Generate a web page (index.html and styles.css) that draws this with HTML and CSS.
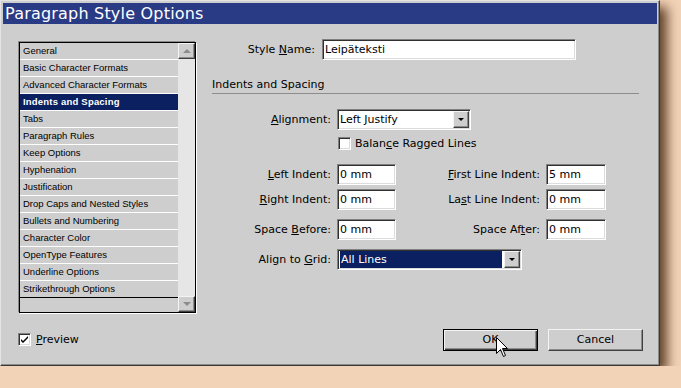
FILE: index.html
```html
<!DOCTYPE html>
<html lang="en">
<head>
<meta charset="UTF-8">
<meta name="viewport" content="width=device-width, initial-scale=1.0">
<title>Paragraph Style Options</title>
<link rel="stylesheet" href="styles.css">
</head>
<body>

<div class="dialog">
    <div class="titlebar">Paragraph Style Options</div>
    <div class="content">
        <div class="main">
            <div class="sidebar">
                <ul class="cats">
                    <li>General</li>
                    <li>Basic Character Formats</li>
                    <li>Advanced Character Formats</li>
                    <li class="active">Indents and Spacing</li>
                    <li>Tabs</li>
                    <li>Paragraph Rules</li>
                    <li>Keep Options</li>
                    <li>Hyphenation</li>
                    <li>Justification</li>
                    <li>Drop Caps and Nested Styles</li>
                    <li>Bullets and Numbering</li>
                    <li>Character Color</li>
                    <li>OpenType Features</li>
                    <li>Underline Options</li>
                    <li>Strikethrough Options</li>
                </ul>
                <div class="scrollbar">
                    <span class="sbtn"><span class="tri up"></span></span>
                    <span class="sbtn"><span class="tri down"></span></span>
                </div>
            </div>

            <div class="pane">
                <div class="name-row">
                    <span class="name-label">Style <u>N</u>ame:</span>
                    <div class="field name-field">Leipäteksti</div>
                </div>
                <div class="section">Indents and Spacing</div>

                <div class="fields">
                    <div class="row">
                        <span class="label"><u>A</u>lignment:</span>
                        <div class="field select align-select">
                            <span class="value">Left Justify</span>
                            <span class="drop"><span class="arrow"></span></span>
                        </div>
                    </div>
                    <div class="row row-check">
                        <span class="check-wrap">
                            <span class="checkbox"></span>
                            <span>Balan<u>c</u>e Ragged Lines</span>
                        </span>
                    </div>
                    <div class="row row-first">
                        <span class="label"><u>L</u>eft Indent:</span>
                        <div class="field">0 mm</div>
                        <span class="label"><u>F</u>irst Line Indent:</span>
                        <div class="field">5 mm</div>
                    </div>
                    <div class="row row-tight">
                        <span class="label"><u>R</u>ight Indent:</span>
                        <div class="field">0 mm</div>
                        <span class="label">La<u>s</u>t Line Indent:</span>
                        <div class="field">0 mm</div>
                    </div>
                    <div class="row row-space">
                        <span class="label">Space <u>B</u>efore:</span>
                        <div class="field">0 mm</div>
                        <span class="label">Space Af<u>t</u>er:</span>
                        <div class="field">0 mm</div>
                    </div>
                    <div class="row row-space">
                        <span class="label">Align to <u>G</u>rid:</span>
                        <div class="field select grid-select">
                            <span class="value hl">All Lines</span>
                            <span class="drop"><span class="arrow"></span></span>
                        </div>
                    </div>
                </div>
            </div>
        </div>

        <div class="footer">
            <span class="check-wrap">
                <span class="checkbox checked">
                    <svg width="9" height="9" viewBox="0 0 9 9"><path d="M1 4 L3 6 L8 1 V3 L3 8 L1 6 Z" fill="#000"/></svg>
                </span>
                <span><u>P</u>review</span>
            </span>
            <div class="buttons">
                <button class="btn default">OK</button>
                <button class="btn">Cancel</button>
            </div>
        </div>
    </div>

    <svg class="cursor" width="12" height="20" viewBox="0 0 12 20">
        <path d="M0.5 0.5 V16.5 L4.5 12.5 L7.5 19.5 L9.5 18.5 L6.5 11.5 H11.5 Z" fill="#fff" stroke="#000" stroke-width="1" stroke-linejoin="miter"/>
    </svg>
</div>

</body>
</html>
```

FILE: styles.css
```css
body {
    margin: 0;
    background-color: #f2d3b8;
    font-family: "DejaVu Sans", Verdana, sans-serif;
    font-size: 11px;
    color: #000;
}
u {
    text-decoration-thickness: 1px;
    text-underline-offset: 1px;
}

.dialog {
    position: relative;
    width: 660px;
    height: 366px;
    box-sizing: border-box;
    background-color: #cecece;
    border: 1px solid;
    border-color: #e4e4e4 #3a3a3a #3a3a3a #e4e4e4;
    box-shadow: inset -1px -1px 0 #8c8c8c, 7px 7px 11px rgba(60, 30, 5, 0.8);
}
.titlebar {
    margin: 2px 2px 0;
    height: 21px;
    padding-left: 2px;
    background-color: #2a3b85;
    color: #fff;
    font-size: 16px;
    letter-spacing: 0.2px;
    line-height: 21px;
}
.content {
    padding: 13px 16px 0 17px;
}
.main {
    display: flex;
    gap: 16px;
}

/* category list */
.sidebar {
    display: flex;
    margin: 5px 0 0 1px;
    width: 177px;
    height: 271px;
    box-sizing: border-box;
    border: 1px solid #000;
    box-shadow: -1px -1px 0 #8a8a8a, 1px 1px 0 #fff;
}
.cats {
    list-style: none;
    margin: 0;
    padding: 0;
    width: 158px;
    font-family: "Liberation Sans", Arial, sans-serif;
    font-size: 9.5px;
}
.cats li {
    height: 16px;
    line-height: 16px;
    padding-left: 3px;
    border-bottom: 1px solid #fff;
    white-space: nowrap;
}
.cats li:last-child {
    border-bottom-color: #000;
}
.cats li.active {
    background-color: #0a2060;
    color: #fff;
    font-weight: bold;
    letter-spacing: 0.2px;
}
.scrollbar {
    flex: 1;
    display: flex;
    flex-direction: column;
    justify-content: space-between;
    background-color: #e6e6e6;
}
.sbtn {
    display: flex;
    align-items: center;
    justify-content: center;
    height: 16px;
    box-sizing: border-box;
    background-color: #cecece;
    border: 1px solid;
    border-color: #f4f4f4 #404040 #404040 #f4f4f4;
    box-shadow: inset -1px -1px 0 #8c8c8c;
}
.tri {
    width: 0;
    height: 0;
    border-left: 4px solid transparent;
    border-right: 4px solid transparent;
}
.tri.up {
    border-bottom: 4px solid #8c8c8c;
}
.tri.down {
    border-top: 4px solid #8c8c8c;
}

/* right side */
.pane {
    width: 427px;
    padding-top: 2px;
}
.name-row {
    display: flex;
    align-items: center;
    gap: 7px;
}
.name-label {
    width: 103px;
    text-align: right;
}
.field {
    height: 21px;
    box-sizing: border-box;
    padding-left: 2px;
    line-height: 19px;
    background-color: #fff;
    border: 1px solid;
    border-color: #808080 #fff #fff #808080;
    box-shadow: inset 1px 1px 0 #303030, inset -1px -1px 0 #dcdcdc;
    white-space: nowrap;
}
.name-field {
    width: 254px;
}
.section {
    margin-top: 17px;
    line-height: 16px;
    border-bottom: 1px solid #8c8c8c;
}

.fields {
    margin-top: 15px;
}
.row {
    display: grid;
    grid-template-columns: 119px 59px 138px 60px;
    column-gap: 6px;
    align-items: center;
}
.row .label {
    text-align: right;
    white-space: nowrap;
}
.row-check {
    margin-top: 7px;
}
.row-first {
    margin-top: 14px;
}
.row-tight {
    margin-top: 4px;
}
.row-space {
    margin-top: 9px;
}
.select {
    grid-column: 2 / 5;
    display: flex;
    align-items: center;
    padding: 0 1px 0 2px;
}
.align-select {
    width: 134px;
}
.grid-select {
    width: 185px;
}
.select .value {
    flex: 1;
    height: 17px;
    line-height: 17px;
}
.select .value.hl {
    margin-right: 2px;
    padding-left: 1px;
    background-color: #0a2060;
    color: #fff;
}
.drop {
    display: flex;
    align-items: center;
    justify-content: center;
    width: 16px;
    height: 17px;
    box-sizing: border-box;
    background-color: #cecece;
    border: 1px solid;
    border-color: #f4f4f4 #404040 #404040 #f4f4f4;
    box-shadow: inset -1px -1px 0 #8c8c8c;
}
.arrow {
    width: 0;
    height: 0;
    border-left: 3px solid transparent;
    border-right: 3px solid transparent;
    border-top: 3px solid #000;
}

.check-wrap {
    display: flex;
    align-items: center;
    gap: 4px;
    white-space: nowrap;
}
.row-check .check-wrap {
    grid-column: 2 / 5;
    margin-left: 1px;
}
.checkbox {
    display: flex;
    align-items: center;
    justify-content: center;
    width: 13px;
    height: 13px;
    box-sizing: border-box;
    background-color: #fff;
    border: 1px solid;
    border-color: #808080 #fff #fff #808080;
    box-shadow: inset 1px 1px 0 #303030, inset -1px -1px 0 #dcdcdc;
}

/* bottom */
.footer {
    display: flex;
    align-items: center;
    justify-content: space-between;
    margin-top: 15px;
    height: 23px;
}
.footer .check-wrap {
    gap: 5px;
}
.buttons {
    display: flex;
    gap: 10px;
}
.btn {
    width: 95px;
    height: 22px;
    padding: 0;
    font-family: "DejaVu Sans", Verdana, sans-serif;
    font-size: 11px;
    color: #000;
    background-color: #cecece;
    border: 1px solid;
    border-color: #f4f4f4 #404040 #404040 #f4f4f4;
    box-shadow: inset -1px -1px 0 #8c8c8c;
}
.btn.default {
    border-color: #000;
    box-shadow: inset 1px 1px 0 #f4f4f4, inset -1px -1px 0 #404040, inset -2px -2px 0 #8c8c8c;
}
.cursor {
    position: absolute;
    left: 495px;
    top: 336px;
}
```
